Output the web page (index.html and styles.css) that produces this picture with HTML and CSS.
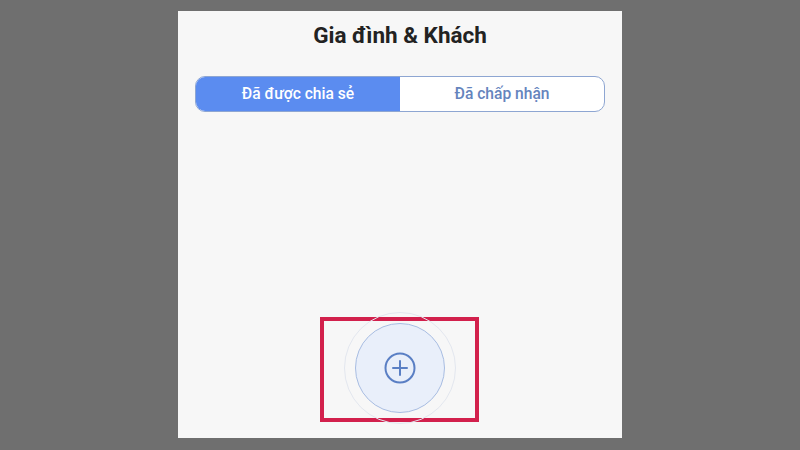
FILE: index.html
```html
<!DOCTYPE html>
<html lang="vi">
<head>
    <meta charset="UTF-8">
    <title>Gia đình &amp; Khách</title>
    <link rel="stylesheet" href="styles.css">
</head>
<body>
    <div class="panel">
        <h1 class="title">Gia đình &amp; Khách</h1>

        <div class="tabs">
            <a href="#" class="tab active">Đã được chia sẻ</a>
            <a href="#" class="tab">Đã chấp nhận</a>
        </div>

        <div class="spacer"></div>

        <div class="add-area">
            <div class="highlight">
                <span class="ring"></span>
                <button class="add-btn" aria-label="Thêm">
                    <svg width="32" height="32" viewBox="0 0 32 32" fill="none" stroke="#5a7fc4" stroke-width="2" stroke-linecap="round">
                        <circle cx="16" cy="16" r="14.5"/>
                        <path d="M16 9v14M9 16h14"/>
                    </svg>
                </button>
            </div>
        </div>
    </div>
</body>
</html>
```

FILE: styles.css
```css
* {
    margin: 0;
    padding: 0;
    box-sizing: border-box;
    font-family: Roboto, "Noto Sans", sans-serif;
}

body {
    background: #6f6f6f;
    padding-top: 11px;
    height: 450px;
    overflow: hidden;
}

.panel {
    width: 444px;
    height: 427px;
    margin: 0 auto;
    background: #f7f7f7;
    padding: 11px 17px 16px;
    display: flex;
    flex-direction: column;
}

.title {
    font-size: 22.5px;
    line-height: 26px;
    font-weight: 700;
    color: #222;
    text-align: center;
}

.tabs {
    margin-top: 28px;
    height: 36px;
    display: flex;
    border: 1px solid #8ea6d2;
    border-radius: 10px;
    overflow: hidden;
    background: #fff;
}

.tab {
    flex: 1;
    display: flex;
    align-items: center;
    justify-content: center;
    font-size: 15.6px;
    font-weight: 500;
    color: #6584bd;
    text-decoration: none;
}

.tab.active {
    background: #5b8cf0;
    color: #fff;
}

.spacer {
    flex: 1;
}

.add-area {
    display: flex;
    justify-content: center;
    padding-right: 2px;
}

.highlight {
    position: relative;
    width: 159px;
    height: 105px;
    border: 4px solid #d2204c;
    display: flex;
    align-items: center;
    justify-content: center;
}

.ring {
    position: absolute;
    left: 50%;
    top: 50%;
    width: 112px;
    height: 112px;
    margin: -58px 0 0 -55px;
    border-radius: 50%;
    border: 1px solid #e3e7ef;
}

.add-btn {
    position: relative;
    width: 90px;
    height: 90px;
    margin-top: -3px;
    margin-left: 2px;
    border-radius: 50%;
    border: 1.5px solid #a8bde2;
    background: #e9effa;
    display: flex;
    align-items: center;
    justify-content: center;
    cursor: pointer;
}
```
